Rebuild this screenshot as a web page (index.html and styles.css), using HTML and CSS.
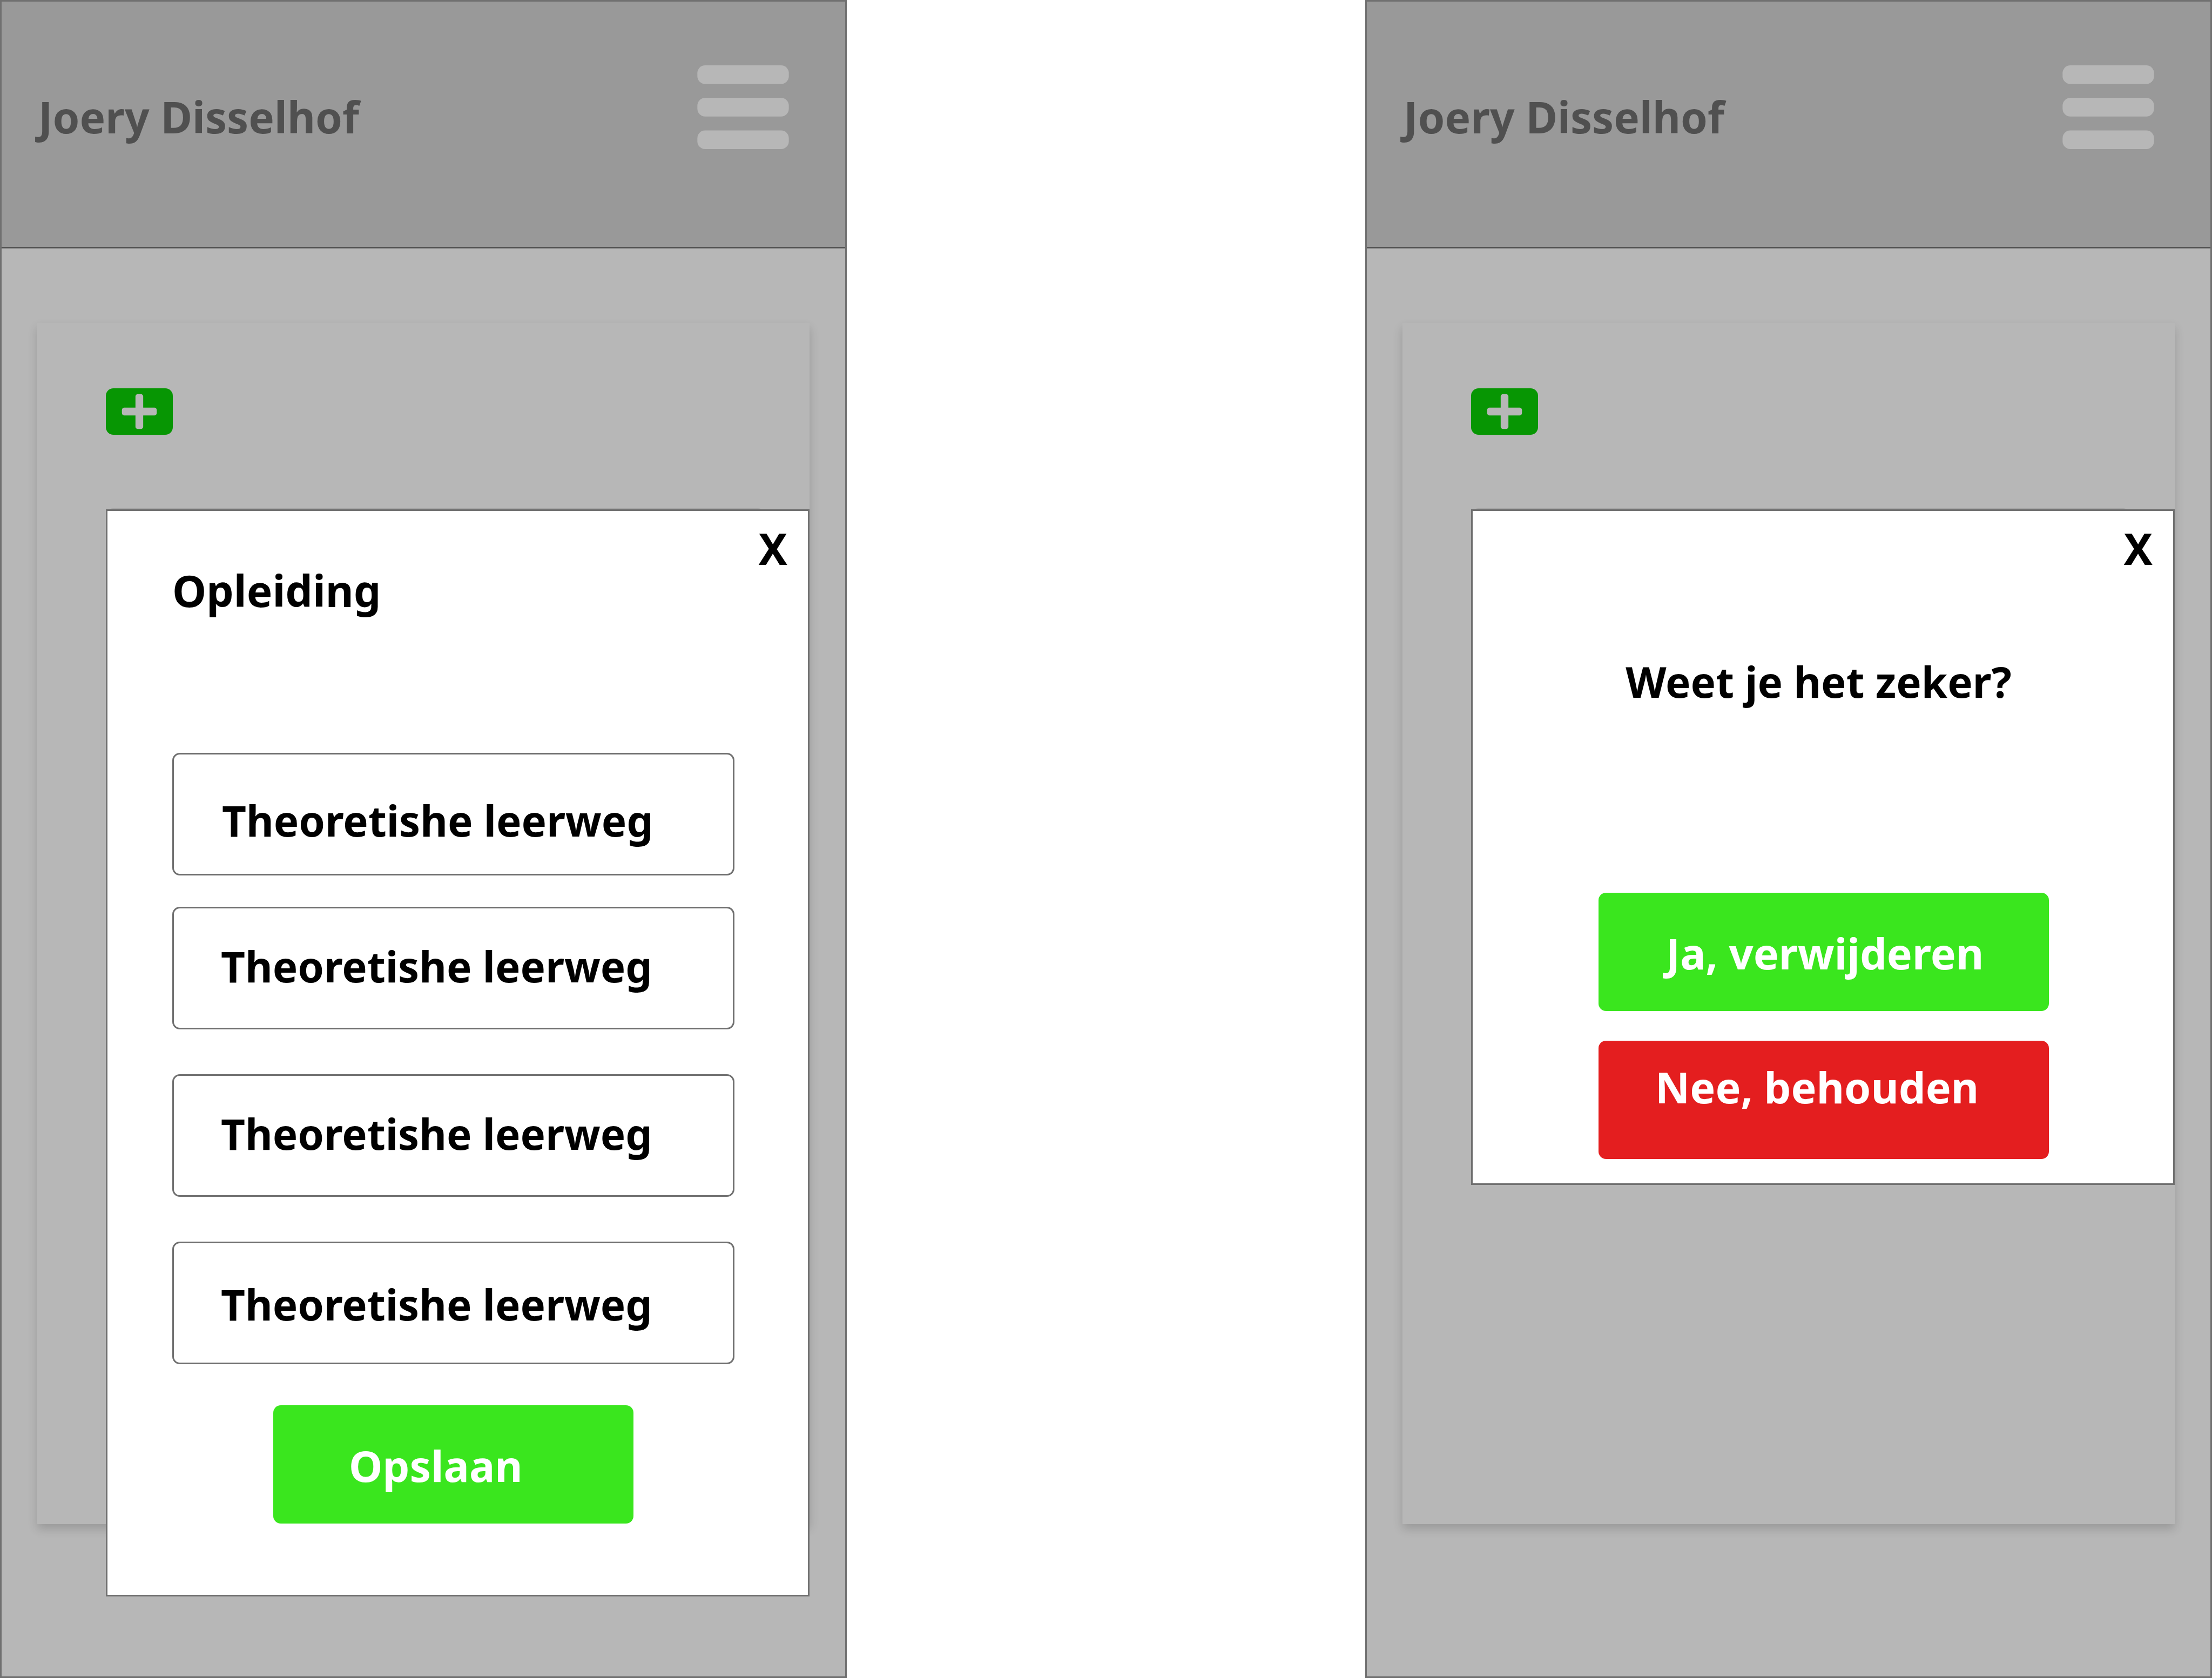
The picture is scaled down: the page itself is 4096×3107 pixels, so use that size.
FILE: index.html
```html
<!DOCTYPE html>
<html lang="nl">
<head>
  <meta charset="utf-8">
  <meta name="viewport" content="width=device-width, initial-scale=1">
  <title>Joery Disselhof</title>
  <link rel="stylesheet" href="styles.css">
</head>
<body>
  <main class="board">
    <section class="phone">
      <header class="topbar">
        <h1 class="name">Joery Disselhof</h1>
        <button class="menu" type="button" aria-label="Menu">
          <svg class="menu-icon" viewBox="0 0 236 216" aria-hidden="true">
            <rect width="236" height="48" rx="20"/>
            <rect y="84" width="236" height="48" rx="20"/>
            <rect y="168" width="236" height="48" rx="20"/>
          </svg>
        </button>
      </header>
      <div class="card">
        <button class="add" type="button" aria-label="Toevoegen">
          <svg class="add-icon" viewBox="0 0 172 120" aria-hidden="true">
            <rect class="add-bar" x="41" y="50" width="90" height="20" rx="6"/>
            <rect class="add-bar" x="76" y="15" width="20" height="90" rx="6"/>
          </svg>
        </button>
        <div class="entry"></div>
      </div>

      <form class="dialog" role="dialog" aria-labelledby="edit-title">
        <button class="close" type="button">X</button>
        <div class="dialog-body">
          <h2 class="title" id="edit-title">Opleiding</h2>
          <div class="fields">
            <input class="field field-first" type="text" aria-label="Opleiding 1" value="Theoretishe leerweg">
            <input class="field" type="text" aria-label="Opleiding 2" value="Theoretishe leerweg">
            <input class="field" type="text" aria-label="Opleiding 3" value="Theoretishe leerweg">
            <input class="field field-last" type="text" aria-label="Opleiding 4" value="Theoretishe leerweg">
          </div>
          <button class="action save" type="button">Opslaan</button>
        </div>
      </form>
    </section>

    <section class="phone">
      <header class="topbar">
        <h1 class="name">Joery Disselhof</h1>
        <button class="menu" type="button" aria-label="Menu">
          <svg class="menu-icon" viewBox="0 0 236 216" aria-hidden="true">
            <rect width="236" height="48" rx="20"/>
            <rect y="84" width="236" height="48" rx="20"/>
            <rect y="168" width="236" height="48" rx="20"/>
          </svg>
        </button>
      </header>
      <div class="card">
        <button class="add" type="button" aria-label="Toevoegen">
          <svg class="add-icon" viewBox="0 0 172 120" aria-hidden="true">
            <rect class="add-bar" x="41" y="50" width="90" height="20" rx="6"/>
            <rect class="add-bar" x="76" y="15" width="20" height="90" rx="6"/>
          </svg>
        </button>
        <div class="entry"></div>
      </div>

      <div class="dialog" role="dialog" aria-labelledby="confirm-title">
        <button class="close" type="button">X</button>
        <div class="dialog-body confirm-body">
          <h2 class="question" id="confirm-title">Weet je het zeker?</h2>
          <div class="choices">
            <button class="action yes" type="button">Ja, verwijderen</button>
            <button class="action no" type="button">Nee, behouden</button>
          </div>
        </div>
      </div>
    </section>
  </main>
</body>
</html>
```
FILE: styles.css
```css
:root {
  --line: #707070;
  --dim: #b7b7b7;
  --dim-bar: #999999;
  --dim-ink: #505050;
  --green: #3ae61e;
  --red: #e41e1f;
}

* {
  box-sizing: border-box;
}

body {
  margin: 0;
  background: #fff;
  color: #000;
  font: 700 80px/78px "Noto Sans", "Open Sans", sans-serif;
}

h1,
h2 {
  margin: 0;
  font: inherit;
}

button,
input {
  margin: 0;
  padding: 0;
  border: 0;
  background: none;
  color: inherit;
  font: inherit;
}

.board {
  display: grid;
  grid-template-columns: 49fr 30fr 49fr;
  min-height: 100vh;
}

/* Phone screens */

.phone {
  position: relative;
  display: flex;
  flex-direction: column;
  border: 3px solid var(--line);
  background: var(--dim);
}

.phone:last-child {
  grid-column: 3;
}

.topbar {
  display: flex;
  align-items: flex-start;
  justify-content: space-between;
  min-height: 457px;
  padding: 118px 104px 118px 68px;
  border-bottom: 3px solid var(--dim-ink);
  background: var(--dim-bar);
}

.name {
  padding-top: 56px;
  color: var(--dim-ink);
}

.menu-icon {
  display: block;
  width: 170px;
  height: 155px;
  fill: var(--dim);
}

.card {
  flex: 1;
  margin: 138px 66px 282px;
  padding: 121px 82px 0 127px;
  background: var(--dim);
  box-shadow: 0 9px 17px rgba(0, 0, 0, 0.16);
}

.add {
  display: block;
  border-radius: 14px;
  background: #079603;
}

.add-icon {
  display: block;
  width: 124px;
  height: 86px;
}

.add-bar {
  fill: var(--dim);
}

.entry {
  height: 227px;
  margin-top: 136px;
  border: 3px solid #a6a6a6;
  border-radius: 14px;
}

/* Dialogs over the dimmed screen */

.dialog {
  position: absolute;
  top: 940px;
  left: 193px;
  right: 66px;
  display: flex;
  flex-direction: column;
  padding-top: 30px;
  border: 3px solid var(--line);
  background: #fff;
}

.close {
  align-self: flex-end;
  margin-right: 38px;
}

.dialog-body {
  display: flex;
  flex-direction: column;
  padding: 0 136px 132px 120px;
}

.fields {
  display: flex;
  flex-direction: column;
  gap: 83px;
  margin-top: 262px;
}

.field {
  width: 100%;
  height: 227px;
  padding: 68px 0 75px 87px;
  border: 3px solid var(--line);
  border-radius: 14px;
  background: #fff;
  font-size: 78px;
}

.field-first {
  margin-bottom: -25px;
  padding: 83px 0 60px 89px;
}

.field-last {
  padding: 74px 0 69px 87px;
}

.action {
  border-radius: 14px;
  color: #fff;
  font-size: 79px;
  text-align: left;
}

.save {
  align-self: center;
  width: 667px;
  margin-top: 76px;
  padding: 73px 0 68px 140px;
  background: var(--green);
}

.confirm-body {
  padding-top: 169px;
  padding-bottom: 45px;
}

.question {
  font-size: 78px;
  text-align: center;
}

.choices {
  display: flex;
  flex-direction: column;
  gap: 55px;
  margin: 352px 94px 0 113px;
}

.yes {
  padding: 73px 0 68px 125px;
  background: var(--green);
}

.no {
  padding: 47px 0 94px 105px;
  background: var(--red);
}
```
